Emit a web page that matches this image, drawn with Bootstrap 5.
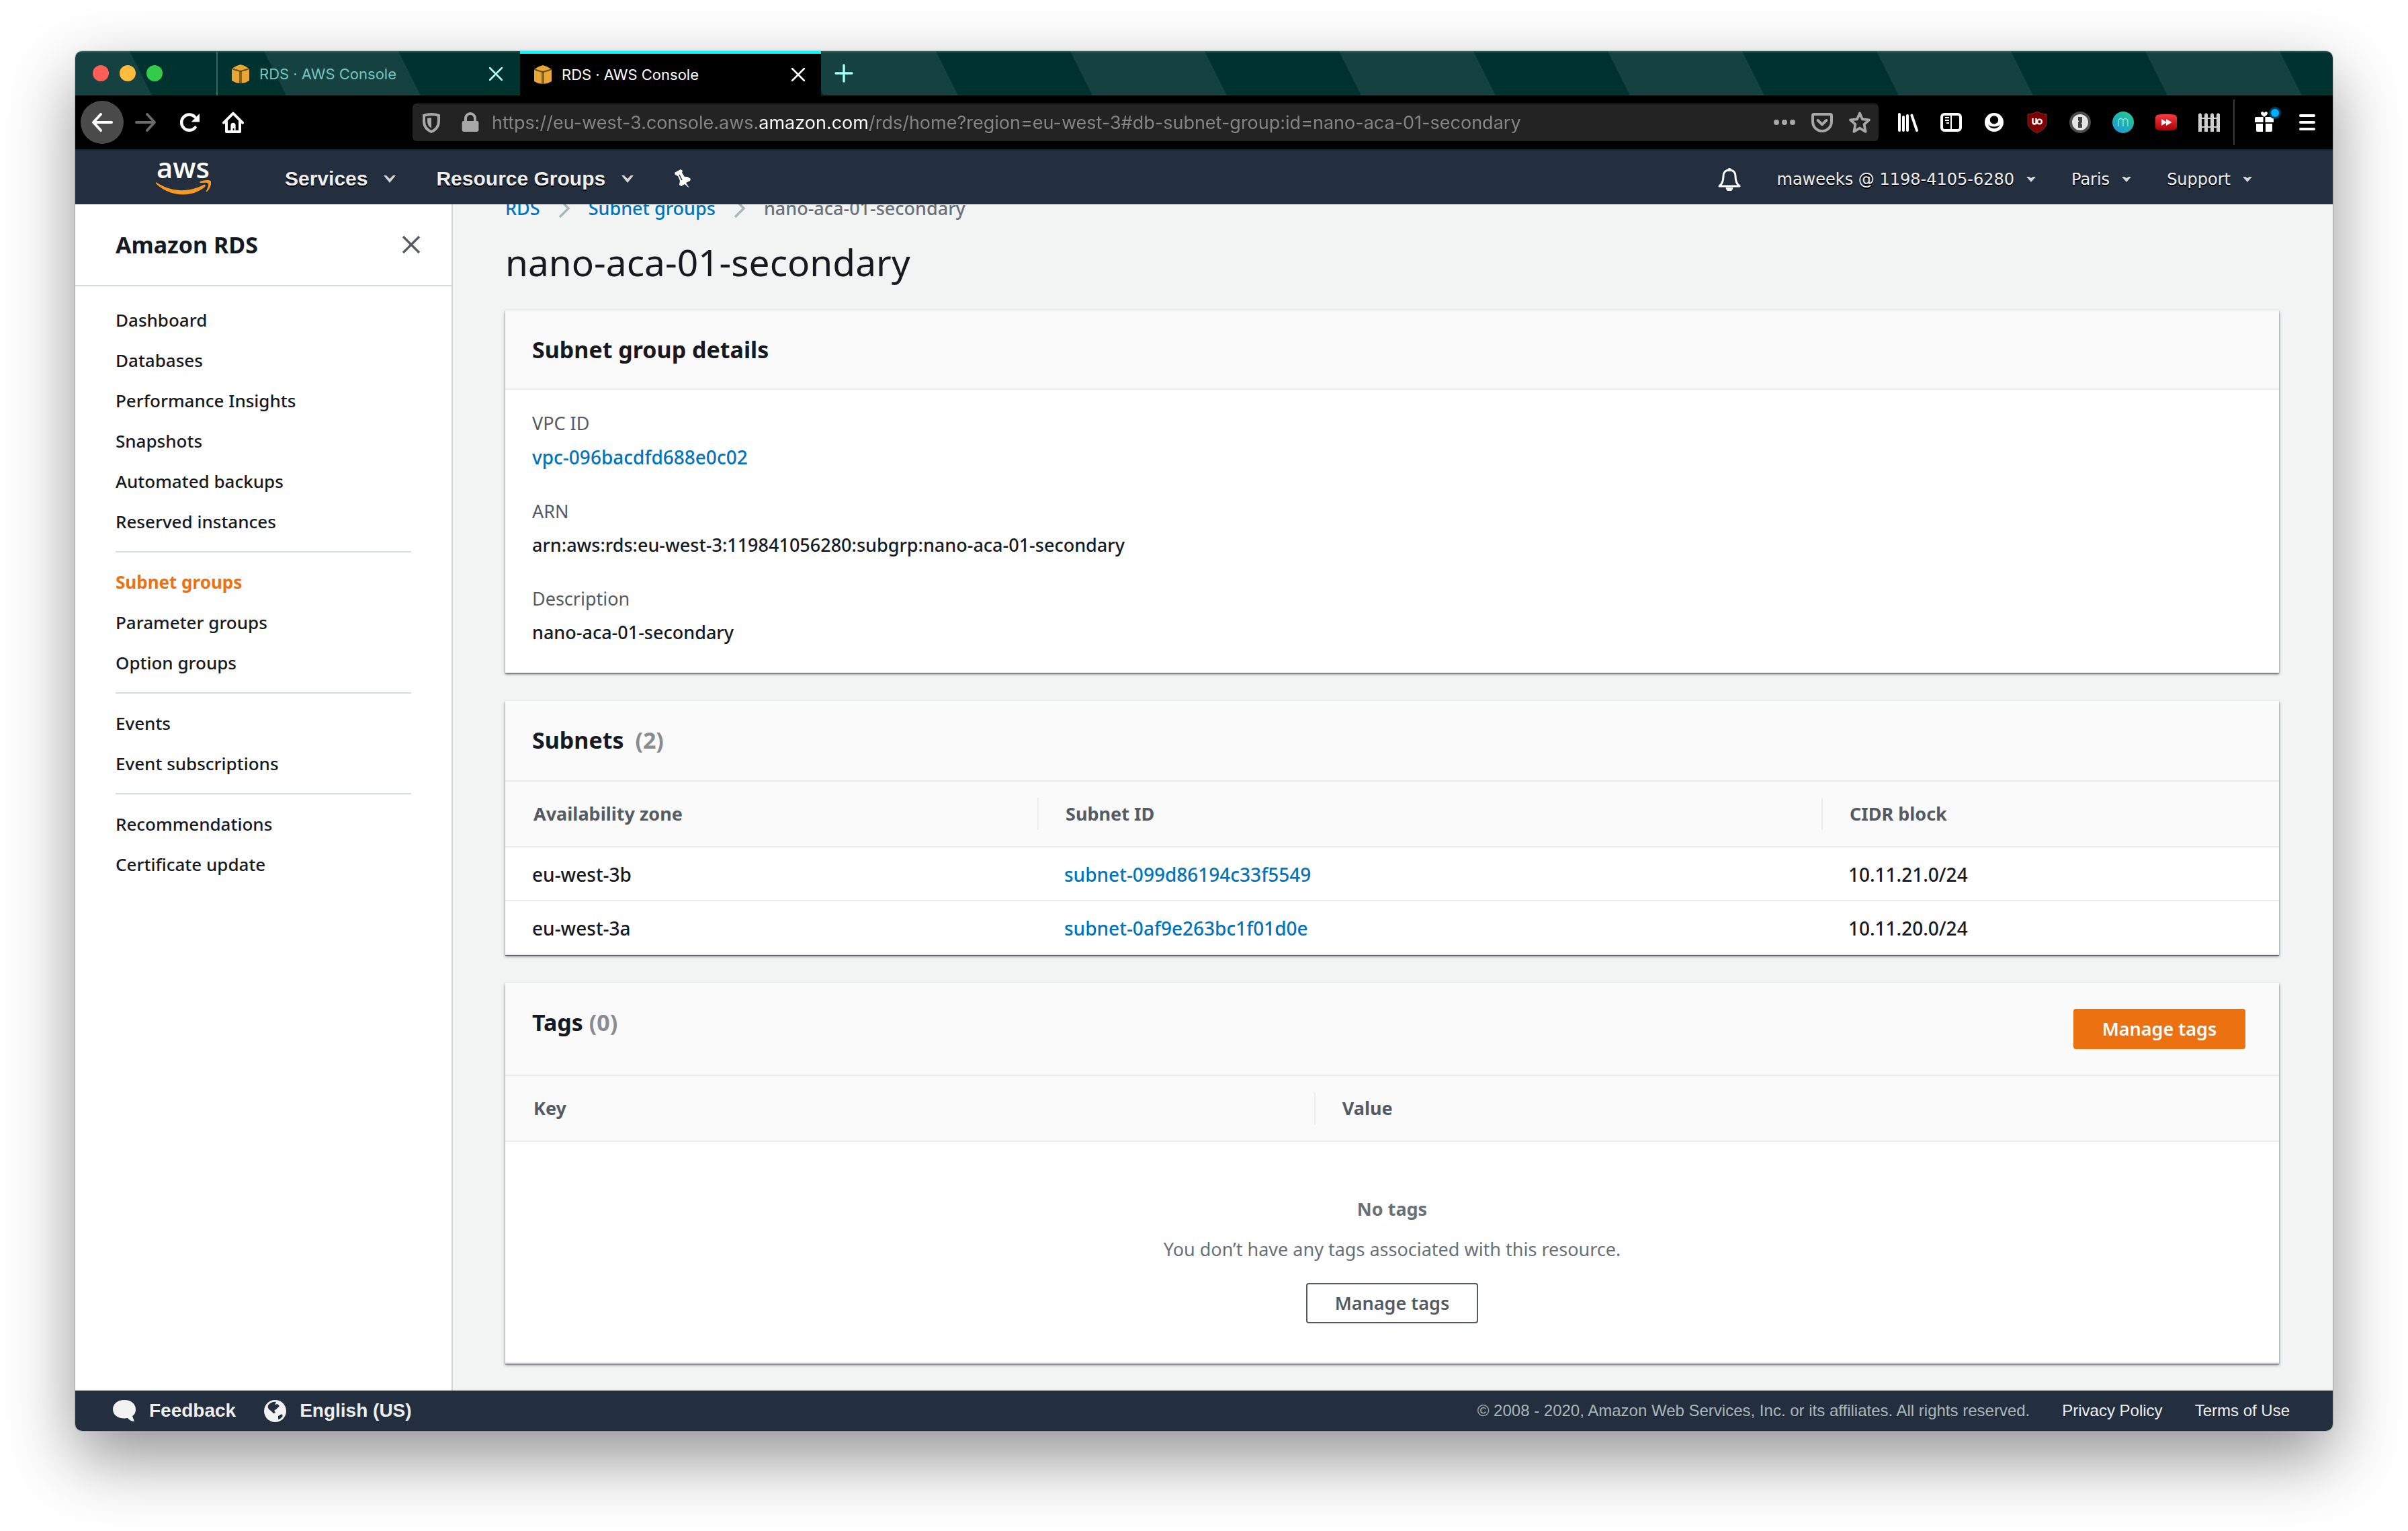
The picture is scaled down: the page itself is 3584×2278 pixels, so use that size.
<!DOCTYPE html>
<html lang="en">
<head>
<meta charset="utf-8">
<meta name="viewport" content="width=device-width, initial-scale=1">
<title>RDS · AWS Console</title>
<link href="https://cdn.jsdelivr.net/npm/bootstrap@5.3.0/dist/css/bootstrap.min.css" rel="stylesheet">
<style>
:root{--ink:#16191f;--muted:#545b64;--soft:#687078;--link:#0073bb;--line:#eaeded;--navy:#232f3e;--orange:#ec7211}
body{background:#fff;color:var(--ink);font-family:"Noto Sans","Open Sans",sans-serif;font-size:27px;line-height:40px}
a{text-decoration:none;color:var(--link)}
svg{display:block;flex:none}
.desk{min-height:100vh;padding:76px 112px 148px}
.win{border-radius:10px;overflow:hidden;box-shadow:0 0 2px rgba(0,0,0,.5),0 40px 100px rgba(0,0,0,.43)}
.plain{border:0;background:none;padding:0;color:inherit;font:inherit}

/* tab strip */
.tabstrip{height:66px;background:repeating-linear-gradient(63.435deg,#154140 0 102px,#003330 102px 281px,#154140 281px 358px) 0 0/400px 66px;box-shadow:inset 0 2px 0 rgba(255,255,255,.16);font:22px/28px Inter,sans-serif}
.lights{width:210px;gap:16px;padding-left:26px}
.lights svg{width:24px;height:24px}
.tabx{width:448px;gap:14px;padding:2px 24px 0 20px;color:#76c6c0}
.tabx.idle{border-left:2px solid #3a6665;width:452px;padding-right:26px}
.tabx.live{background:#000;color:#fff;border-top:4px solid #00feff;padding-bottom:2px}
.tabx .plain{color:#b0fffb}
.tabx.live .plain{color:#fff}

/* toolbar */
.toolbar{height:80px;background:#000;color:#fff;padding:0 6px 0 8px}
.tool{width:64px;height:64px;border-radius:50%;display:grid;place-items:center}
.history{gap:1px}
.tool.back{background:#4b4b4b}
.tool.dim{color:#6b6b6b}
.urlbox{height:56px;margin:0 12px 0 235px;padding:0 0 0 6px;background:#232323;border-radius:6px;color:#a8a8a8}
.urlbox .plain{width:56px;height:56px;display:grid;place-items:center}
.urlbox .shield{width:44px}
.urlbox input{border:0;outline:0;padding:2px 0 0;font:27px/40px Inter,sans-serif;background:linear-gradient(90deg,#868686 397px,#fff 397px 561px,#868686 561px);-webkit-background-clip:text;background-clip:text;color:transparent;min-width:0}
.vline{width:2px;height:68px;background:#38383a}
.gift span{top:12px;right:10px;width:12px;height:12px;border-radius:50%;background:#00b0ff;box-shadow:0 0 0 3px #003c58}

/* console header */
.awsnav{height:82px;background:var(--navy);border-top:2px solid #0a2a2d;padding:0 120px;color:#eee}
.awsnav .plain{text-shadow:0 2px 0 #000}
.awslogo{padding-bottom:4px}
.awsmain{font:700 30px/40px "Liberation Sans",Arial,sans-serif;margin-left:110px;gap:60px;padding-top:4px}
.awsside{font:24px/40px "DejaVu Sans",Verdana,sans-serif;gap:53px;padding-top:6px}
.awsside .plain{gap:18px}

/* side navigation */
.sidenav{width:562px;flex:none;background:#fff;border-right:2px solid #d0d5d6}
.sidehead{height:122px;padding:0 42px 0 60px;border-bottom:2px solid #d5dbdb;color:var(--muted)}
.sidehead h2,.panel h2{font-size:34px;line-height:44px;font-weight:700;margin:0;color:var(--ink)}
.sidelist{padding:20px 60px;font-size:26px;font-weight:500;line-height:60px}
.sidelist a{display:block;color:var(--ink)}
.sidelist a.on{color:var(--orange);font-weight:700}
.sidelist hr{margin:14px 0;border-top:2px solid #d5dbdb;opacity:1}

/* page */
.sheet{background:#f2f3f3;overflow:hidden;min-width:0}
.scrolled{margin-top:-14px;padding:0 80px 40px 78px}
.crumbs{gap:26px;color:var(--soft);font-weight:500}
.crumbs svg{color:#aab7b8}
h1{font-size:55px;line-height:72px;font-weight:400;margin:24px 0 36px}
.panel{background:#fff;box-shadow:0 -2px 0 #eaeded,0 1px 1px rgba(0,28,36,.5),0 2px 4px rgba(0,28,36,.5);margin-bottom:42px}
.panel:last-child{margin-bottom:0}
.panelhead{background:#fafafa;border-bottom:2px solid var(--line);padding:36px 50px 38px 40px}
.panelhead.slim{padding-bottom:36px}
.count{color:#888c90}
.facts{padding:30px 40px 40px;margin:0}
.facts dt{font-weight:400;color:var(--muted)}
.facts dd{font-weight:500;margin:10px 0 40px}
.facts a{font-size:28px}
.facts dd:last-child{margin-bottom:0}
.grid{width:100%;table-layout:fixed}
.grid th{background:#fafafa;border-bottom:2px solid var(--line);padding:24px 0;font-weight:700;color:var(--muted)}
.grid th span{display:block;line-height:48px;padding-left:40px;border-left:2px solid var(--line)}
.grid th:first-child span{border-color:transparent}
.grid td{border-bottom:2px solid var(--line);padding:20px 40px 18px;font-size:28px;font-weight:500}
.w30{width:30%}.w44{width:44.2%}.w45{width:45.6%}
.actbtn{height:60px;width:256px;border-radius:4px;border:2px solid var(--muted);background:#fff;color:var(--muted);font-weight:600;padding:0}
.actbtn.hot{background:var(--orange);border-color:var(--orange);color:#fff;margin-top:2px}
.empty{padding:80px 0 58px;color:var(--soft);border-bottom:2px solid var(--line)}
.empty p{margin:20px 0 30px}

/* footer */
.foot{height:60px;background:var(--navy);color:#eee;padding:0 64px 0 56px;font:24px/40px "Liberation Sans",Arial,sans-serif}
.foot .plain{font-weight:700;font-size:28px;gap:20px;margin-right:42px}
.foot a{color:#eee}
.foot .legal{color:#aab7b8}
</style>
</head>
<body>
<svg class="d-none">
  <symbol id="cube" viewBox="0 0 28 28"><path d="M8 2 14 0l6 2 7 4v18l-6 3-7 1-7-1-6-3V6z" fill="#e8a735"/><path d="M1 5l6 2 7 2 7-2 6-2v2l-5 2-8 2-8-2-5-2z" fill="#4a3610" opacity=".8"/><path d="M12 10h4v18h-4z" fill="#4a3610" opacity=".6"/></symbol>
  <symbol id="x" viewBox="0 0 20 20"><path d="M1 1l18 18M19 1 1 19" stroke="currentColor" stroke-width="2.6" stroke-linecap="round"/></symbol>
  <symbol id="chev" viewBox="0 0 18 12"><path d="M0 1h4l5 5 5-5h4L9 12z" fill="#d6d6d6"/></symbol>
  <symbol id="caret" viewBox="0 0 14 10"><path d="M0 1h4l3 2 3-2h4L7 9z" fill="#d6d6d6"/></symbol>
  <symbol id="next" viewBox="0 0 20 30"><path d="M3 2l13 13L3 28" fill="none" stroke="currentColor" stroke-width="3.5"/></symbol>
  <symbol id="dot" viewBox="0 0 24 24"><circle cx="12" cy="12" r="12" fill="currentColor"/></symbol>
</svg>
<div class="desk">
<div class="win">

  <div class="tabstrip d-flex">
    <div class="lights d-flex align-items-center"><svg color="#ff5f57"><use href="#dot"/></svg><svg color="#ffbd3e"><use href="#dot"/></svg><svg color="#33cc4a"><use href="#dot"/></svg></div>
    <div class="tabx idle d-flex align-items-center"><svg width="28" height="28"><use href="#cube"/></svg>RDS · AWS Console<button class="plain ms-auto" aria-label="Close tab"><svg width="20" height="20"><use href="#x"/></svg></button></div>
    <div class="tabx live d-flex align-items-center"><svg width="28" height="28"><use href="#cube"/></svg>RDS · AWS Console<button class="plain ms-auto" aria-label="Close tab"><svg width="20" height="20"><use href="#x"/></svg></button></div>
    <button class="plain px-3 ms-1" aria-label="New tab"><svg width="28" height="28" viewBox="0 0 28 28"><path d="M14 2v24M2 14h24" stroke="#a6fffa" stroke-width="3.4" stroke-linecap="round"/></svg></button>
  </div>

  <div class="toolbar d-flex align-items-center">
    <div class="history d-flex">
    <button class="plain tool back" aria-label="Back"><svg width="32" height="32" viewBox="0 0 16 16" fill="none" stroke="currentColor" stroke-width="2" stroke-linecap="round" stroke-linejoin="round"><path d="M15 8H1.5M7 2 1.5 8 7 14"/></svg></button>
    <button class="plain tool dim" aria-label="Forward"><svg width="32" height="32" viewBox="0 0 16 16" fill="none" stroke="currentColor" stroke-width="2" stroke-linecap="round" stroke-linejoin="round"><path d="M1 8h13.5M9 2l5.500 6L9 14"/></svg></button>
    <button class="plain tool" aria-label="Reload"><svg width="32" height="32" viewBox="0 0 16 16"><path d="M12.300 11.800A5.800 5.800 0 1 1 12 4" fill="none" stroke="currentColor" stroke-width="2.200" stroke-linecap="round"/><path d="M15.500 1.500v6.200h-6.200z" fill="currentColor"/></svg></button>
    <button class="plain tool" aria-label="Home"><svg width="32" height="32" viewBox="0 0 16 16"><path d="M1 8.300 8 1.300l7 7M3 7v8h10V7" fill="none" stroke="currentColor" stroke-width="2" stroke-linejoin="round" stroke-linecap="round"/><path d="M6.200 15V10.200a1.800 1.800 0 0 1 3.600 0V15h-1v-2.500h-1V15z" fill="currentColor"/></svg></button>
    </div>

    <div class="urlbox d-flex align-items-center flex-grow-1">
      <button class="plain shield me-2" aria-label="Tracking protection"><svg width="32" height="32" viewBox="0 0 16 16"><path d="M8 2C6 2 4 2.300 2.500 2.900V7c0 4 2 6.500 5.500 8 3.500-1.500 5.500-4 5.500-8V2.900C12 2.300 10 2 8 2z" fill="none" stroke="currentColor" stroke-width="2"/><path d="M8 4.600c-1.300 0-2 .1-3 .4v2.200c0 2.300 1 4 3 5.100z" fill="currentColor"/></svg></button>
      <button class="plain me-1" aria-label="Connection secure"><svg width="32" height="32" viewBox="0 0 16 16"><path d="M4.500 8V5a3.500 3.500 0 0 1 7 0v3" fill="none" stroke="currentColor" stroke-width="2"/><rect x="1.800" y="7" width="12.400" height="8" rx="1.200" fill="currentColor"/></svg></button>
      <input class="flex-grow-1" type="text" aria-label="Address" value="https://eu-west-3.console.aws.amazon.com/rds/home?region=eu-west-3#db-subnet-group:id=nano-aca-01-secondary">
      <button class="plain" aria-label="Page actions"><svg width="32" height="32" viewBox="0 0 16 16" fill="currentColor"><circle cx="2" cy="8" r="2"/><circle cx="8" cy="8" r="2"/><circle cx="14" cy="8" r="2"/></svg></button>
      <button class="plain" aria-label="Save to Pocket"><svg width="32" height="32" viewBox="0 0 16 16" fill="none" stroke="currentColor" stroke-width="2" stroke-linecap="round" stroke-linejoin="round"><path d="M2 2h12a1 1 0 0 1 1 1v4.500a7 7 0 0 1-14 0V3a1 1 0 0 1 1-1z"/><path d="M4.800 6.500 8 9.600l3.200-3.100"/></svg></button>
      <button class="plain" aria-label="Bookmark"><svg width="32" height="32" viewBox="0 0 16 16" fill="none" stroke="currentColor" stroke-width="1.900" stroke-linejoin="round"><path d="M8 1.200l2 4.500 5 .5-3.700 3.300 1 5.400L8 12.300l-4.300 2.600 1-5.400L1 6.200l5-.5z"/></svg></button>
    </div>

    <button class="plain tool" aria-label="Library"><svg width="32" height="32" viewBox="0 0 16 16" stroke="#fff" stroke-width="2" stroke-linecap="round"><path d="M1.500 2v12M4.500 4v10M7.500 3v11M10.700 2.800 14.500 14"/></svg></button>
    <button class="plain tool" aria-label="Sidebars"><svg width="32" height="32" viewBox="0 0 16 16" fill="none" stroke="#fff"><rect x="1" y="2" width="14" height="12" rx="2" stroke-width="2"/><path d="M8 2v12M3.500 4.500h3M3.500 6.500h3M4.500 8.500h2" stroke-width="1"/></svg></button>
    <button class="plain tool" aria-label="Account"><svg width="32" height="32" viewBox="0 0 16 16"><circle cx="8" cy="8" r="7" fill="#fff"/><circle cx="8" cy="6.200" r="3.100" fill="#000"/><path d="M3.500 9.800c1 1 2.600 1.500 4.500 1.500s3.500-.5 4.500-1.500a5 5 0 0 1-9 0z" fill="#000"/></svg></button>
    <button class="plain tool" aria-label="uBlock Origin"><svg width="32" height="32" viewBox="0 0 32 32"><path d="M16 0c5 3 9 3.500 14 4v12c0 8-6 12-14 16C8 28 2 24 2 16V4c5-.5 9-1 14-4z" fill="#800000" stroke="#8a5a5a" stroke-width=".6"/><path d="M9.500 10v6a2.500 2.500 0 0 0 5 0v-6M14.500 19v-2" fill="none" stroke="#fff" stroke-width="2.400"/><circle cx="19.500" cy="15" r="3.400" fill="none" stroke="#fff" stroke-width="2.400"/></svg></button>
    <button class="plain tool" aria-label="Password manager"><svg width="32" height="32" viewBox="0 0 32 32"><circle cx="16" cy="16" r="14" fill="#e4e4e4" stroke="#4c4c4c" stroke-width="4"/><path d="M13 8h6v8l-1.500 1.500L19 19v5h-6v-8l1.500-1.500L13 13z" fill="#444"/></svg></button>
    <button class="plain tool" aria-label="Momentum"><svg width="32" height="32" viewBox="0 0 32 32"><defs><linearGradient id="mg" x1=".8" y1="0" x2=".2" y2="1"><stop offset="0" stop-color="#22c993"/><stop offset="1" stop-color="#2197d2"/></linearGradient></defs><circle cx="16" cy="16" r="16" fill="url(#mg)"/><path d="M9 22v-8a3.500 3.500 0 0 1 7 0v8M16 14a3.500 3.500 0 0 1 7 0v8" fill="none" stroke="#8fe6dd" stroke-width="1.300"/></svg></button>
    <button class="plain tool" aria-label="Video speed"><svg width="32" height="32" viewBox="0 0 32 32"><defs><linearGradient id="rg" x1="0" y1="0" x2="0" y2="1"><stop offset="0" stop-color="#fb3b42"/><stop offset="1" stop-color="#ab0007"/></linearGradient></defs><path d="M5 4.500q11-1.500 22 0 5 .5 5 5v13q0 4.500-5 5-11 1.500-22 0-5-.5-5-5v-13q0-4.500 5-5z" fill="url(#rg)"/><path d="M9 11l7 4.200V11l8.500 5-8.500 5v-4.200L9 21z" fill="#fff"/></svg></button>
    <button class="plain tool" aria-label="Containers"><svg width="32" height="32" viewBox="0 0 32 32" fill="#cfcfcf"><path d="M0 30V4l2.500-2L5 4v26zM9 30V4l2.500-2L14 4v26zM18 30V4l2.500-2L23 4v26zM27 30V4l2.500-2L32 4v26z"/><path d="M0 9h32v2H0zM0 22h32v2H0z"/></svg></button>
    <div class="vline mx-1"></div>
    <button class="plain tool gift position-relative ms-2" aria-label="What's new"><svg width="32" height="32" viewBox="0 0 16 16" fill="#fff"><path d="M8 4C6 2.600 5.500 1.800 5.500 1.200 5.500 0 7.300-.3 8 1c.7-1.300 2.500-1 2.500.2C10.500 1.800 10 2.600 8 4zM1 5a1 1 0 0 1 1-1h5.300v4H1zM8.700 4H14a1 1 0 0 1 1 1v3H8.700zM2 9h5v6H3a1 1 0 0 1-1-1zM9 9h5v5a1 1 0 0 1-1 1H9z"/></svg><span class="position-absolute"></span></button>
    <button class="plain tool" aria-label="Menu"><svg width="24" height="24" viewBox="0 0 24 24" stroke="#fff" stroke-width="4" stroke-linecap="round"><path d="M2 2h20M2 12h20M2 22h20"/></svg></button>
  </div>

  <header class="awsnav d-flex align-items-center">
    <a href="#" class="awslogo" aria-label="AWS home"><svg width="82" height="56" viewBox="0 0 82 56"><text x="1" y="31" font-family="Open Sans,sans-serif" font-weight="600" font-size="42" fill="#fff">aws</text><path d="M0 37c24 16 50 15 71 4 2-1 4 1 2 3-20 17-53 15-73-5-1-1-1-2 0-2z" fill="#f7981f"/><path d="M66 36c6-2 14-3 16 0 1 4-2 12-6 15-1 1-2 0-1-1 2-4 4-9 3-11-2-2-7-1-12-1-1 0-1-1 0-2z" fill="#f7981f"/></svg></a>
    <nav class="awsmain d-flex align-items-center">
      <button class="plain d-flex align-items-center">Services<svg width="18" height="12" class="ms-4"><use href="#chev"/></svg></button>
      <button class="plain d-flex align-items-center">Resource Groups<svg width="18" height="12" class="ms-4"><use href="#chev"/></svg></button>
      <button class="plain" aria-label="Pin shortcuts"><svg width="26" height="28" viewBox="0 0 26 28" fill="#fff"><path d="M1 5 10 0l3 2-1 3 4 6 4 0 5 3-1 3-6 3 5 8-7-6-5 3-3-2 1-6-3-7-4-2z"/><path d="M8 8l4 8" stroke="#232f3e" stroke-width="1.500"/></svg></button>
    </nav>
    <nav class="awsside d-flex align-items-center ms-auto">
      <button class="plain" aria-label="Notifications"><svg width="36" height="34" viewBox="0 0 36 34"><path d="M18 3c6 0 9 4 9 9 0 8 2 12 6 15H3c4-3 6-7 6-15 0-5 3-9 9-9z" fill="none" stroke="#fff" stroke-width="3" stroke-linejoin="round"/><circle cx="18" cy="2.500" r="2.500" fill="#fff"/><path d="M12.500 29h11a5.500 5.500 0 0 1-11 0z" fill="#fff"/></svg></button>
      <button class="plain d-flex align-items-center">maweeks @ 1198-4105-6280<svg width="14" height="10"><use href="#caret"/></svg></button>
      <button class="plain d-flex align-items-center">Paris<svg width="14" height="10"><use href="#caret"/></svg></button>
      <button class="plain d-flex align-items-center">Support<svg width="14" height="10"><use href="#caret"/></svg></button>
    </nav>
  </header>

  <div class="d-flex">
    <aside class="sidenav">
      <div class="sidehead d-flex align-items-center justify-content-between"><h2>Amazon RDS</h2><button class="plain" aria-label="Close navigation"><svg width="36" height="28" viewBox="0 0 36 28"><path d="M6 2l24 24M30 2 6 26" stroke="currentColor" stroke-width="3.400"/></svg></button></div>
      <nav class="sidelist">
        <a href="#">Dashboard</a><a href="#">Databases</a><a href="#">Performance Insights</a><a href="#">Snapshots</a><a href="#">Automated backups</a><a href="#">Reserved instances</a>
        <hr>
        <a href="#" class="on">Subnet groups</a><a href="#">Parameter groups</a><a href="#">Option groups</a>
        <hr>
        <a href="#">Events</a><a href="#">Event subscriptions</a>
        <hr>
        <a href="#">Recommendations</a><a href="#">Certificate update</a>
      </nav>
    </aside>

    <main class="sheet flex-grow-1">
      <div class="scrolled">
        <nav class="crumbs d-flex align-items-center" aria-label="Breadcrumb"><a href="#">RDS</a><svg width="20" height="30"><use href="#next"/></svg><a href="#">Subnet groups</a><svg width="20" height="30"><use href="#next"/></svg><span>nano-aca-01-secondary</span></nav>
        <h1>nano-aca-01-secondary</h1>

        <section class="panel">
          <div class="panelhead slim"><h2>Subnet group details</h2></div>
          <dl class="facts">
            <dt>VPC ID</dt><dd><a href="#">vpc-096bacdfd688e0c02</a></dd>
            <dt>ARN</dt><dd>arn:aws:rds:eu-west-3:119841056280:subgrp:nano-aca-01-secondary</dd>
            <dt>Description</dt><dd>nano-aca-01-secondary</dd>
          </dl>
        </section>

        <section class="panel">
          <div class="panelhead"><h2>Subnets <span class="count ms-2">(2)</span></h2></div>
          <table class="grid">
            <colgroup><col class="w30"><col class="w44"><col></colgroup>
            <thead><tr><th scope="col"><span>Availability zone</span></th><th scope="col"><span>Subnet ID</span></th><th scope="col"><span>CIDR block</span></th></tr></thead>
            <tbody>
              <tr><td>eu-west-3b</td><td><a href="#">subnet-099d86194c33f5549</a></td><td>10.11.21.0/24</td></tr>
              <tr><td>eu-west-3a</td><td><a href="#">subnet-0af9e263bc1f01d0e</a></td><td>10.11.20.0/24</td></tr>
            </tbody>
          </table>
        </section>

        <section class="panel">
          <div class="panelhead d-flex align-items-start justify-content-between"><h2>Tags <span class="count">(0)</span></h2><button class="actbtn hot">Manage tags</button></div>
          <table class="grid">
            <colgroup><col class="w45"><col></colgroup>
            <thead><tr><th scope="col"><span>Key</span></th><th scope="col"><span>Value</span></th></tr></thead>
          </table>
          <div class="empty d-flex flex-column align-items-center">
            <strong>No tags</strong>
            <p>You don’t have any tags associated with this resource.</p>
            <button class="actbtn">Manage tags</button>
          </div>
        </section>
      </div>
    </main>
  </div>

  <footer class="foot d-flex align-items-center">
    <button class="plain d-flex align-items-center"><svg width="34" height="33" viewBox="0 0 34 33"><path d="M17 0c10 0 17 6 17 14 0 5-2 8-5 10l3 8c-5 0-8-3-10-5-13 2-22-4-22-13C0 6 7 0 17 0z" fill="#f2f2f2"/></svg>Feedback</button>
    <button class="plain d-flex align-items-center"><svg width="33" height="33" viewBox="0 0 33 33"><circle cx="16.500" cy="16.500" r="16.500" fill="#f2f2f2"/><path d="M6 8c3-4 8-6 12-5l-2 4 4-1 3 3-4 4-4 3 2 3-3 1-4-4c-3-2-5-4-4-8zM21 24l5-3 2 3-4 4-3 1z" fill="#232f3e"/></svg>English (US)</button>
    <span class="legal ms-auto">© 2008 - 2020, Amazon Web Services, Inc. or its affiliates. All rights reserved.</span>
    <a href="#" class="ms-5">Privacy Policy</a>
    <a href="#" class="ms-5">Terms of Use</a>
  </footer>
</div>
</div>
<script src="https://cdn.jsdelivr.net/npm/bootstrap@5.3.0/dist/js/bootstrap.bundle.min.js"></script>
</body>
</html>
